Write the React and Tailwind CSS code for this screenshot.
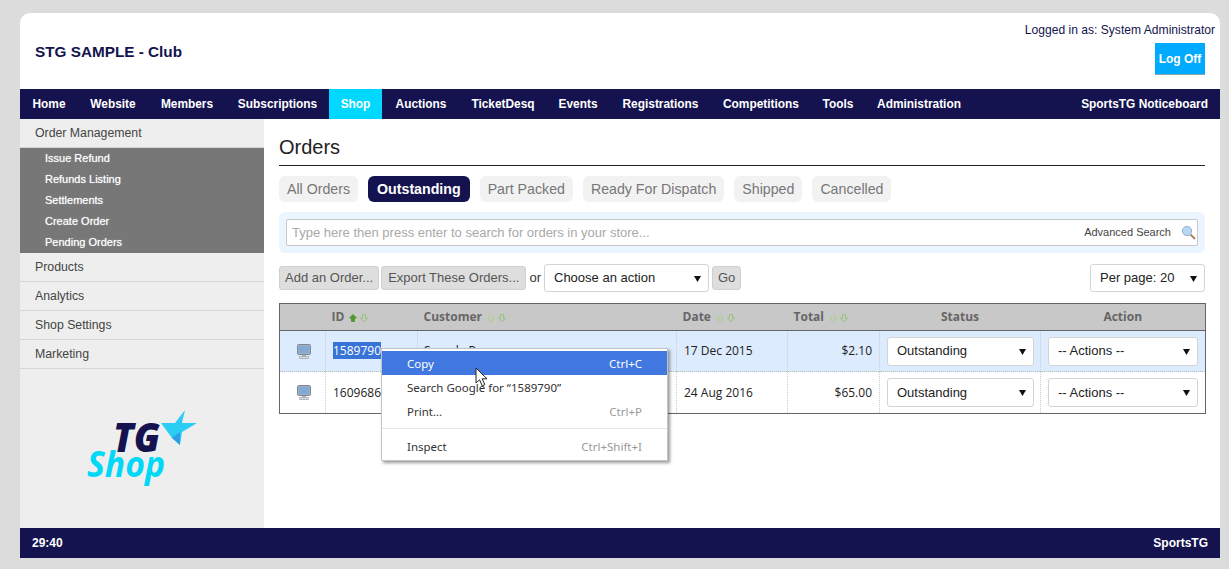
import React from 'react'

const navItems = ['Home', 'Website', 'Members', 'Subscriptions', 'Shop', 'Auctions', 'TicketDesq', 'Events', 'Registrations', 'Competitions', 'Tools', 'Administration']
const navWidths = {
  Home: 'w-[58px]', Website: 'w-[70px]', Members: 'w-[78px]', Subscriptions: 'w-[103px]', Shop: 'w-[53px]',
  Auctions: 'w-[78px]', TicketDesq: 'w-[86px]', Events: 'w-[64px]', Registrations: 'w-[101px]',
  Competitions: 'w-[100px]', Tools: 'w-[54px]', Administration: 'w-[108px]',
}
const subLinks = ['Issue Refund', 'Refunds Listing', 'Settlements', 'Create Order', 'Pending Orders']
const sideLinks = ['Products', 'Analytics', 'Shop Settings', 'Marketing']
const tabs = ['All Orders', 'Outstanding', 'Part Packed', 'Ready For Dispatch', 'Shipped', 'Cancelled']

const orders = [
  { id: '1589790', customer: 'Sample Person', date: '17 Dec 2015', total: '$2.10', selected: true },
  { id: '1609686', customer: '', date: '24 Aug 2016', total: '$65.00' },
]

function Caret() {
  return (
    <svg width="7" height="7" viewBox="0 0 7 7" className="shrink-0">
      <path d="M0 1h7L3.5 7z" fill="#111" />
    </svg>
  )
}

function SelectBox({ label, className }) {
  return (
    <div className={`flex items-center justify-between bg-white border border-[#d4d4d4] rounded-[3px] text-[13px] text-[#222] ${className}`}>
      <span>{label}</span>
      <Caret />
    </div>
  )
}

function SortArrows({ active }) {
  return (
    <span className="inline-flex items-center gap-[3px] ml-[5px] align-middle">
      <svg width="8" height="8" viewBox="0 0 8 8">
        <path d="M4 0.5L7.5 4H5.5V7.5H2.5V4H0.5z" fill={active ? '#4c9a2a' : 'none'} stroke={active ? '#4c9a2a' : '#a8d08d'} strokeWidth="0.9" />
      </svg>
      <svg width="8" height="8" viewBox="0 0 8 8">
        <path d="M4 7.5L0.5 4H2.5V0.5H5.5V4H7.5z" fill="none" stroke="#8fc46f" strokeWidth="0.9" />
      </svg>
    </span>
  )
}

function Monitor() {
  return (
    <svg width="14" height="15" viewBox="0 0 14 15" className="ml-[17px]">
      <rect x="0.5" y="0.5" width="13" height="10" rx="1" fill="#a3aebb" stroke="#7d8894" />
      <rect x="2" y="2" width="10" height="7" fill="#86a8d6" />
      <rect x="5" y="11" width="4" height="1.5" fill="#aeb4ba" />
      <rect x="2.5" y="12.5" width="9" height="2" rx="0.5" fill="#dfe2e5" stroke="#8a9199" strokeWidth="0.6" />
    </svg>
  )
}

function Logo() {
  return (
    <svg width="116" height="78" viewBox="0 0 116 78">
      <path d="M77 14H91L101 1L98 14H113L98 23L96 36L88 29z" fill="#2ccdf5" />
      <path d="M88 29L96 23L96 36z" fill="#2a9fe8" />
      <text x="29" y="43" textLength="47" lengthAdjust="spacingAndGlyphs" fontFamily="'Open Sans', sans-serif" fontWeight="800" fontStyle="italic" fontSize="40" fill="#14134f">TG</text>
      <text x="3" y="68" textLength="78" lengthAdjust="spacingAndGlyphs" fontFamily="'Open Sans', sans-serif" fontWeight="700" fontStyle="italic" fontSize="35" fill="#00d8f8">Shop</text>
    </svg>
  )
}

function ContextMenu() {
  return (
    <div className="absolute left-[381px] top-[348px] w-[287px] h-[113px] bg-white border border-[#c4c4c4] shadow-[2px_2px_3px_rgba(0,0,0,0.4)] pt-[2px] font-['Noto_Sans',sans-serif] text-[11.5px] text-[#333] z-10">
      <div className="flex items-center justify-between h-[24px] pt-[2px] px-[25px] bg-[#4178e0] text-white">
        <span>Copy</span><span>Ctrl+C</span>
      </div>
      <div className="flex items-center h-[24px] pt-[2px] px-[25px]">Search Google for “1589790”</div>
      <div className="flex items-center justify-between h-[24px] pt-[2px] px-[25px]">
        <span>Print...</span><span className="text-[#999]">Ctrl+P</span>
      </div>
      <div className="border-t border-[#e6e6e6] mt-[5px] mb-[5px]" />
      <div className="flex items-center justify-between h-[24px] pt-[2px] px-[25px]">
        <span>Inspect</span><span className="text-[#999]">Ctrl+Shift+I</span>
      </div>
      <svg width="13" height="20" viewBox="0 0 13 20" className="absolute left-[93px] top-[18px]">
        <path d="M1 1v15l3.6-3.2 2.6 6 2.6-1.2-2.6-5.8h4.8z" fill="#fff" stroke="#222" strokeWidth="1" />
      </svg>
    </div>
  )
}

export default function App() {
  return (
    <div className="relative h-[569px] bg-[#dcdcdc] pt-[13px] pl-[20px] pr-[9px] font-['Liberation_Sans',Arial,sans-serif] overflow-hidden">
      <div className="flex flex-col h-[556px] rounded-t-[10px] overflow-hidden bg-white">
        {/* Header */}
        <header className="flex justify-between h-[76px] shrink-0 pl-[15px] pr-[5px]">
          <h1 className="mt-[29px] text-[15.3px] leading-[20px] font-bold text-[#14134f]">STG SAMPLE - Club</h1>
          <div className="flex flex-col items-end">
            <p className="mt-[10px] text-[12.1px] leading-[14px] text-[#14134f]">Logged in as: System Administrator</p>
            <div className="mt-[6px] mr-[10px] w-[50px] h-[32px] flex items-center justify-center bg-[#00aaff] border-b border-[#8aa] text-white text-[12px] font-bold">Log Off</div>
          </div>
        </header>

        {/* Nav */}
        <nav className="flex justify-between h-[30px] shrink-0 bg-[#14134f] text-white text-[11.9px] font-bold pr-[12px]">
          <div className="flex">
            {navItems.map(item => (
              <div
                key={item}
                className={`flex items-center justify-center pt-[2px] ${navWidths[item]} ${item === 'Shop' ? 'bg-[#00d8ff]' : ''}`}
              >
                {item}
              </div>
            ))}
          </div>
          <div className="flex items-center pt-[2px]">SportsTG Noticeboard</div>
        </nav>

        <div className="flex flex-1 min-h-0">
          {/* Sidebar */}
          <aside className="flex flex-col w-[244px] shrink-0 bg-[#eeeeee] text-[12.3px] text-[#444]">
            <div className="flex items-center h-[29px] pl-[15px] border-b border-[#d5d5d5]">Order Management</div>
            <div className="bg-[#777777] text-white text-[11px] [text-shadow:0_0_1px_rgba(255,255,255,0.7)]">
              {subLinks.map(link => (
                <div key={link} className="flex items-center h-[21px] pl-[25px]">{link}</div>
              ))}
            </div>
            {sideLinks.map(link => (
              <div key={link} className="flex items-center h-[29px] pl-[15px] border-b border-[#d5d5d5]">{link}</div>
            ))}
            <div className="pl-[64px] pt-[40px]">
              <Logo />
            </div>
          </aside>

          {/* Main */}
          <main className="flex-1 min-w-0 pl-[15px] pr-[15px]">
            <h2 className="pt-[16px] pb-[6px] text-[20px] leading-[24px] text-[#222] border-b border-[#222]">Orders</h2>

            <div className="flex gap-[10px] mt-[10px]">
              {tabs.map(tab => (
                <div
                  key={tab}
                  className={`flex items-center h-[26px] pt-[2px] rounded-[6px] text-[14.2px] ${tab === 'Outstanding' ? 'px-[9px] bg-[#14134f] text-white font-bold' : 'px-[8px] bg-[#f2f2f2] text-[#777]'}`}
                >
                  {tab}
                </div>
              ))}
            </div>

            {/* Search */}
            <div className="mt-[10px] h-[41px] rounded-[6px] bg-[#eaf5ff] px-[7px] py-[7px]">
              <div className="flex items-center justify-between h-[27px] bg-white border border-[#c8c8c8] rounded-[2px] pl-[5px] pr-[1px]">
                <span className="text-[13px] text-[#a9a9a9]">Type here then press enter to search for orders in your store...</span>
                <div className="flex items-center gap-[10px]">
                  <span className="text-[11px] text-[#444]">Advanced Search</span>
                  <svg width="15" height="15" viewBox="0 0 15 15">
                    <circle cx="6" cy="6" r="4.6" fill="#b9d6f2" stroke="#8fb2d4" />
                    <path d="M9.5 9.5L14 14" stroke="#a8845f" strokeWidth="2" />
                  </svg>
                </div>
              </div>
            </div>

            {/* Toolbar */}
            <div className="flex items-center justify-between mt-[11px]">
              <div className="flex items-center text-[13px] text-[#555]">
                <div className="flex items-center h-[24px] px-[5px] bg-[#dedede] border border-[#d0d0d0] rounded-[3px]">Add an Order...</div>
                <div className="flex items-center h-[24px] px-[6px] ml-[2px] bg-[#dedede] border border-[#d0d0d0] rounded-[3px]">Export These Orders...</div>
                <span className="ml-[3px] text-[#333]">or</span>
                <SelectBox label="Choose an action" className="ml-[3px] w-[165px] h-[28px] pl-[9px] pr-[7px]" />
                <div className="flex items-center h-[24px] px-[5px] ml-[3px] bg-[#dedede] border border-[#d0d0d0] rounded-[3px]">Go</div>
              </div>
              <SelectBox label="Per page: 20" className="w-[115px] h-[28px] pl-[9px] pr-[7px]" />
            </div>

            {/* Orders table */}
            <table className="mt-[11px] w-[926px] table-fixed border-collapse border border-[#666] font-['Open_Sans',sans-serif] text-[12px] text-[#222]">
              <colgroup>
                <col className="w-[46px]" />
                <col className="w-[92px]" />
                <col className="w-[259px]" />
                <col className="w-[111px]" />
                <col className="w-[92px]" />
                <col className="w-[161px]" />
                <col className="w-[165px]" />
              </colgroup>
              <thead>
                <tr className="h-[27px] bg-[#c8c8c8] text-[#666] text-left border-b border-[#666]">
                  <th />
                  <th className="pl-[6px]">ID<SortArrows active /></th>
                  <th className="pl-[6px]">Customer<SortArrows /></th>
                  <th className="pl-[6px]">Date<SortArrows /></th>
                  <th className="pl-[6px]">Total<SortArrows /></th>
                  <th className="text-center">Status</th>
                  <th className="text-center">Action</th>
                </tr>
              </thead>
              <tbody>
                {orders.map(order => (
                  <tr key={order.id} className={`border-b border-dotted border-[#bbb] ${order.selected ? 'h-[41px] bg-[#dcebfd]' : 'h-[42px] bg-white'}`}>
                    <td className="border-r border-dotted border-[#ccc]"><Monitor /></td>
                    <td className="pl-[7px] border-r border-dotted border-[#ccc]">
                      <span className={order.selected ? 'bg-[#3874d8] text-white' : ''}>{order.id}</span>
                    </td>
                    <td className="pl-[6px] border-r border-dotted border-[#ccc]">{order.customer}</td>
                    <td className="pl-[7px] border-r border-dotted border-[#ccc]">{order.date}</td>
                    <td className="pr-[7px] text-right border-r border-dotted border-[#ccc]">{order.total}</td>
                    <td className="pl-[7px] border-r border-dotted border-[#ccc]">
                      <SelectBox label="Outstanding" className="w-[147px] h-[29px] pl-[9px] pr-[7px] font-['Liberation_Sans',sans-serif]" />
                    </td>
                    <td className="pl-[7px]">
                      <SelectBox label="-- Actions --" className="w-[150px] h-[29px] pl-[9px] pr-[7px] font-['Liberation_Sans',sans-serif]" />
                    </td>
                  </tr>
                ))}
              </tbody>
            </table>
          </main>
        </div>

        {/* Footer */}
        <footer className="flex items-center justify-between h-[30px] shrink-0 bg-[#14134f] text-white text-[12px] font-bold px-[12px]">
          <span>29:40</span>
          <span>SportsTG</span>
        </footer>
        <div className="h-[11px] shrink-0 bg-[#dcdcdc]" />
      </div>
      <ContextMenu />
    </div>
  )
}
